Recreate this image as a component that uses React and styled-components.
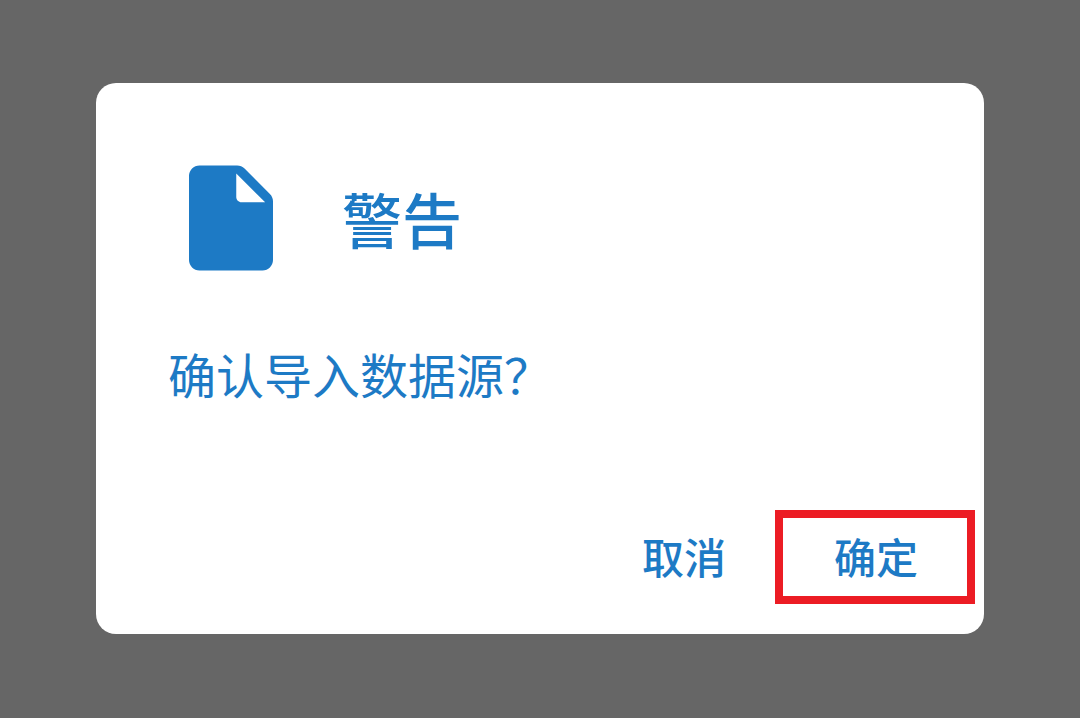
import React from "react";
import styled, { createGlobalStyle } from "styled-components";

const GlobalStyle = createGlobalStyle`
  * { box-sizing: border-box; }
  body {
    margin: 0;
    background: #666666;
    font-family: "Noto Sans CJK SC", sans-serif;
    color: #1d7ac5;
  }
`;

const Backdrop = styled.main`
  display: flex;
  align-items: center;
  justify-content: center;
  min-height: 100vh;
  padding: 48px 96px 49px;
`;

const Dialog = styled.section`
  display: flex;
  flex-direction: column;
  width: 100%;
  padding: 72px 9px 30px 72px;
  border-radius: 20px;
  background: #ffffff;
`;

const Header = styled.header`
  display: flex;
  align-items: center;
  gap: 48px;
`;

const FileIcon = styled.svg`
  flex: none;
  width: 126px;
  height: 126px;
`;

const Title = styled.h1`
  margin: 0;
  font-size: 60px;
  line-height: 80px;
  font-weight: 500;
`;

const Message = styled.p`
  margin: 60px 0 0;
  font-size: 48px;
  line-height: 64px;
`;

const Actions = styled.footer`
  display: flex;
  justify-content: flex-end;
  margin-top: 105px;
`;

const ActionButton = styled.button`
  width: ${(p) => (p.$highlighted ? 200 : 184)}px;
  height: 94px;
  padding: 0 0 2px 2px;
  border: 8px solid ${(p) => (p.$highlighted ? "#ec1c24" : "transparent")};
  background: none;
  color: inherit;
  font-family: inherit;
  font-size: 42px;
  line-height: 56px;
  font-weight: 500;
  cursor: pointer;
`;

export default function App() {
  return (
    <>
      <GlobalStyle />
      <Backdrop>
        <Dialog role="alertdialog" aria-labelledby="title" aria-describedby="message">
          <Header>
            <FileIcon viewBox="0 0 24 24" aria-hidden="true">
              <path
                fill="#1d7ac5"
                fillRule="evenodd"
                d="M6 2C4.9 2 4 2.9 4 4V20C4 21.1 4.9 22 6 22H18C19.1 22 20 21.1 20 20V8.83C20 8.3 19.79 7.79 19.41 7.42L14.58 2.59C14.21 2.21 13.7 2 13.17 2ZM13 3.5L18.5 9H14C13.45 9 13 8.55 13 8Z"
              />
            </FileIcon>
            <Title id="title">警告</Title>
          </Header>
          <Message id="message">确认导入数据源？</Message>
          <Actions>
            <ActionButton type="button">取消</ActionButton>
            <ActionButton type="button" $highlighted>确定</ActionButton>
          </Actions>
        </Dialog>
      </Backdrop>
    </>
  );
}
